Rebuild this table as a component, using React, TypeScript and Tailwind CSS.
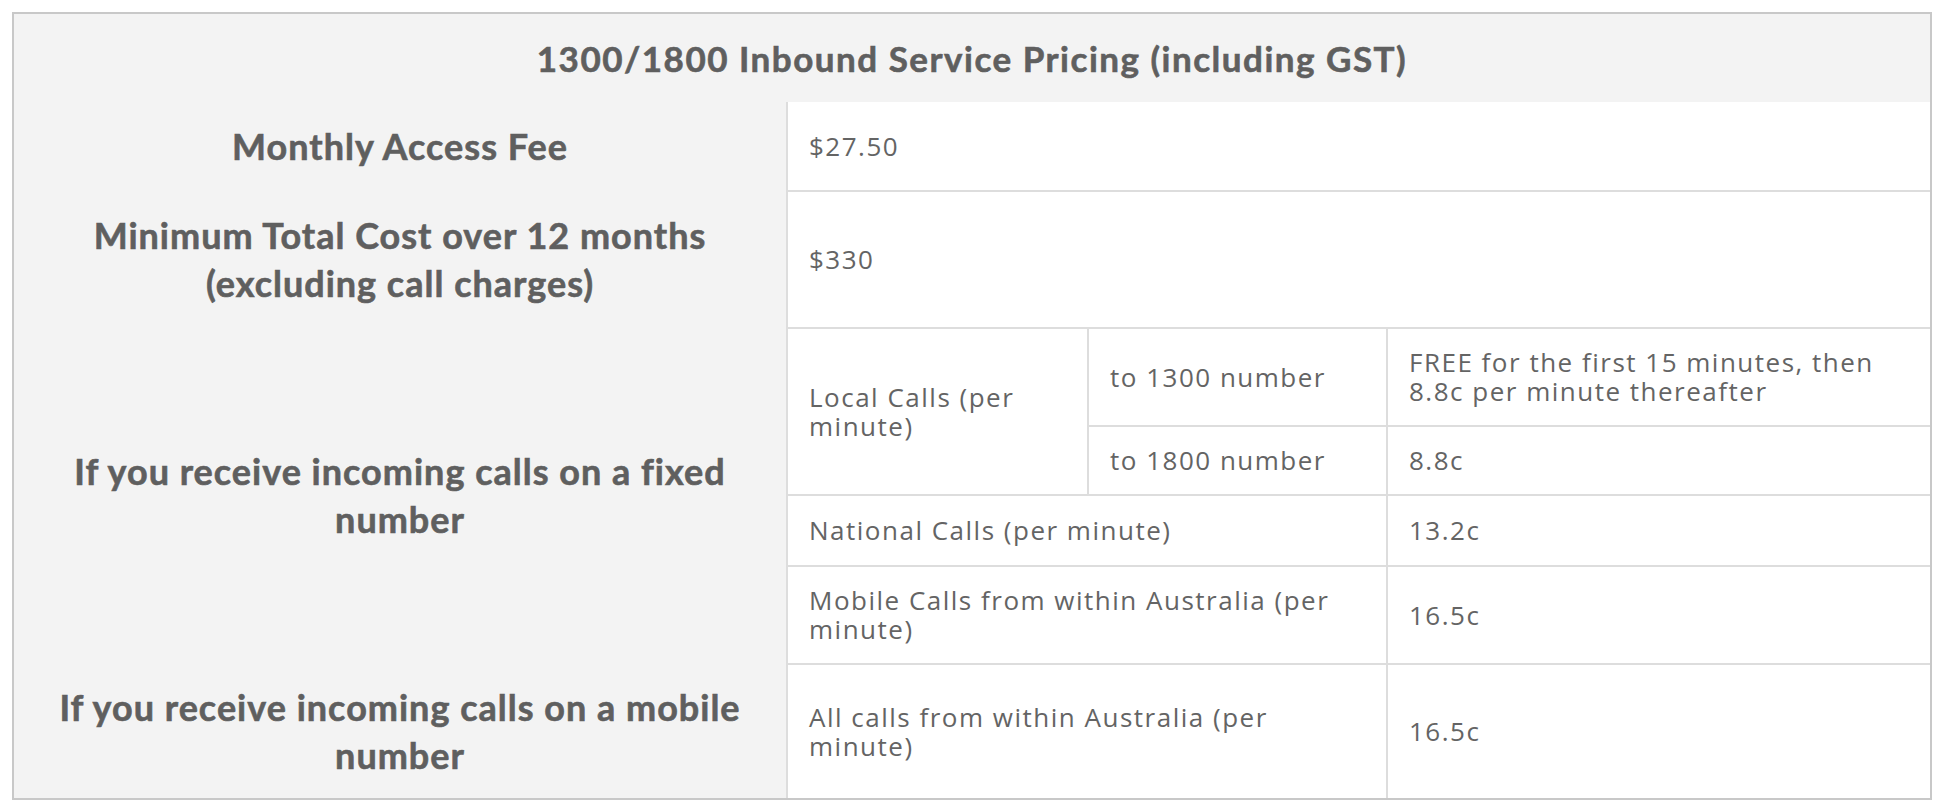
import React from "react";

const cellTxt = "text-[26px] leading-[29px] tracking-[1.5px] text-[#646464] font-normal";

export default function App() {
  const w = "bg-white align-middle pl-[21px] pr-4 text-left";
  const bt = "border-t-2 border-[#dddddd]";
  const bl = "border-l-2 border-[#dddddd]";
  const label =
    "bg-[#f3f3f3] align-middle text-center font-bold text-[36px] leading-[48px] tracking-[1px] text-[#5f5f5f] px-6 [font-family:Lato,sans-serif] [-webkit-text-stroke:0.6px_#5f5f5f]";
  return (
    <div
      className="min-h-screen bg-white pt-3 pl-3"
      style={{ fontFamily: "'Open Sans', Lato, sans-serif" }}
    >
      <div className="w-[1920px] border-2 border-[#c8c8c8] bg-[#f3f3f3]">
        <table className={`w-[1916px] table-fixed border-separate border-spacing-0 ${cellTxt}`}>
          <colgroup>
            <col className="w-[772px]" />
            <col className="w-[301px]" />
            <col className="w-[299px]" />
            <col className="w-[544px]" />
          </colgroup>
          <tbody>
            <tr className="h-[88px]">
              <td
                colSpan={4}
                className="bg-[#f3f3f3] text-center align-middle font-bold text-[35px] tracking-[1.5px] text-[#5f5f5f] [font-family:Lato,sans-serif] [-webkit-text-stroke:0.6px_#5f5f5f]"
              >
                1300/1800 Inbound Service Pricing (including GST)
              </td>
            </tr>
            <tr className="h-[88px]">
              <td className={label}>Monthly Access Fee</td>
              <td colSpan={3} className={`${w} ${bl}`}>
                $27.50
              </td>
            </tr>
            <tr className="h-[137px]">
              <td className={label}>
                Minimum Total Cost over 12 months
                <br />
                (excluding call charges)
              </td>
              <td colSpan={3} className={`${w} ${bl} ${bt}`}>
                $330
              </td>
            </tr>
            <tr className="h-[98px]">
              <td rowSpan={4} className={label}>
                If you receive incoming calls on a fixed
                <br />
                number
              </td>
              <td rowSpan={2} className={`${w} ${bl} ${bt}`}>
                Local Calls (per
                <br />
                minute)
              </td>
              <td className={`${w} ${bl} ${bt}`}>to 1300 number</td>
              <td className={`${w} ${bl} ${bt}`}>
                FREE for the first 15 minutes, then
                <br />
                8.8c per minute thereafter
              </td>
            </tr>
            <tr className="h-[69px]">
              <td className={`${w} ${bl} ${bt}`}>to 1800 number</td>
              <td className={`${w} ${bl} ${bt}`}>8.8c</td>
            </tr>
            <tr className="h-[71px]">
              <td colSpan={2} className={`${w} ${bl} ${bt}`}>
                National Calls (per minute)
              </td>
              <td className={`${w} ${bl} ${bt}`}>13.2c</td>
            </tr>
            <tr className="h-[98px]">
              <td colSpan={2} className={`${w} ${bl} ${bt}`}>
                Mobile Calls from within Australia (per
                <br />
                minute)
              </td>
              <td className={`${w} ${bl} ${bt}`}>16.5c</td>
            </tr>
            <tr className="h-[135px]">
              <td className={label}>
                If you receive incoming calls on a mobile
                <br />
                number
              </td>
              <td colSpan={2} className={`${w} ${bl} ${bt}`}>
                All calls from within Australia (per
                <br />
                minute)
              </td>
              <td className={`${w} ${bl} ${bt}`}>16.5c</td>
            </tr>
          </tbody>
        </table>
      </div>
    </div>
  );
}
